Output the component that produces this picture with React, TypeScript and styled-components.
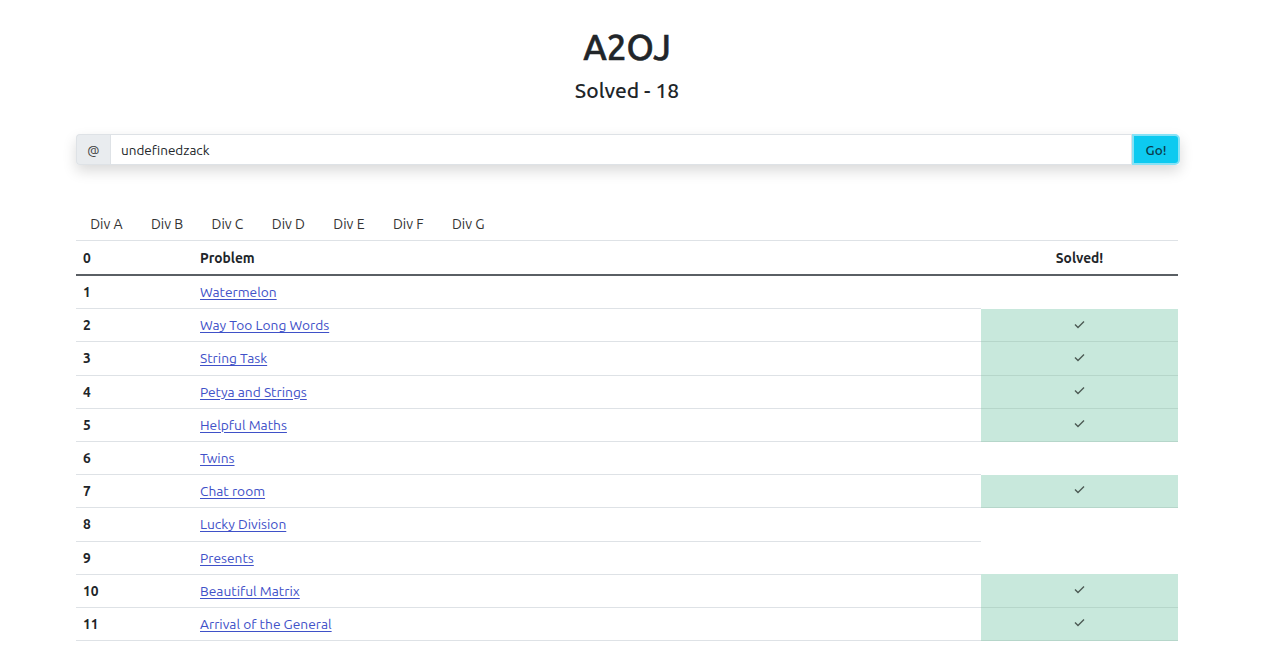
import React from "react";
import styled, { createGlobalStyle } from "styled-components";

const Global = createGlobalStyle`
  html, body { margin: 0; padding: 0; background: #fff; }
  body { font-family: Ubuntu, "Open Sans", "Noto Sans", sans-serif; color: #212529; }
`;

const Page = styled.div`
  width: 1102px;
  margin-left: 76px;
  padding-top: 24px;
`;

const Title = styled.h1`
  margin: 0;
  text-align: center;
  font-size: 35px;
  font-weight: 500;
  line-height: 46px;
  -webkit-text-stroke: 0.6px #212529;
`;

const Sub = styled.h3`
  margin: 5px 0 0;
  text-align: center;
  font-size: 21px;
  font-weight: 500;
  line-height: 30px;
`;

const InputGroup = styled.div`
  margin-top: 29px;
  display: flex;
  height: 31px;
  width: 1104px;
  border-radius: 4px;
  box-shadow: 0 6px 14px rgba(0, 0, 0, 0.15);
`;

const Prepend = styled.span`
  display: flex;
  align-items: center;
  justify-content: center;
  width: 34px;
  background: #e9ecef;
  border: 1px solid #dee2e6;
  border-right: none;
  border-radius: 4px 0 0 4px;
  font-size: 13px;
  color: #444;
  box-sizing: border-box;
`;

const Field = styled.input`
  flex: 1;
  border: 1px solid #dee2e6;
  padding: 0 10px;
  font-family: inherit;
  font-size: 13.5px;
  color: #212529;
  outline: none;
  box-sizing: border-box;
`;

const GoButton = styled.button`
  width: 48px;
  background: #0dcaf0;
  border: 2px solid #86e2f6;
  border-radius: 0 5px 5px 0;
  font-family: inherit;
  font-size: 13.5px;
  font-weight: 500;
  color: #0b3a4a;
  box-sizing: border-box;
  padding: 0;
`;

const Nav = styled.nav`
  margin-top: 44px;
  display: flex;
  height: 31px;
  align-items: flex-start;
`;

const Tab = styled.span`
  padding: 0 14.2px;
  font-size: 14px;
  color: #333;
  line-height: 30px;
`;

const Table = styled.table`
  width: 100%;
  border-collapse: collapse;
  font-size: 13.75px;
`;

const HeadCell = styled.th<{ $center?: boolean }>`
  text-align: ${(p) => (p.$center ? "center" : "left")};
  font-weight: 700;
  height: 33px;
  padding: 0 7px;
  border-top: 1px solid #dee2e6;
  border-bottom: 2px solid #5a5f64;
`;

const Cell = styled.td`
  height: 32.2px;
  padding: 0 7px;
  border-bottom: 1px solid #dee2e6;
`;

const NumCell = styled(Cell)`
  font-weight: 700;
`;

const SolvedCell = styled.td`
  height: 30.2px;
  width: 197px;
  padding: 0 0 2px;
  text-align: center;
  background: #c8e8dc;
  border-bottom: 1px solid #b6d6ca;
  line-height: 0;
`;

const Link = styled.a`
  color: #3f51c8;
  text-decoration: underline;
  text-underline-offset: 2px;
`;

const CheckSvg = styled.svg`
  display: inline-block;
`;

const Check = () => (
  <CheckSvg width="11" height="9" viewBox="0 0 11 9">
    <polyline points="1,4.5 4,7.5 10,1.5" fill="none" stroke="#4d5a55" strokeWidth="1.4" />
  </CheckSvg>
);

const problems: [string, boolean][] = [
  ["Watermelon", false],
  ["Way Too Long Words", true],
  ["String Task", true],
  ["Petya and Strings", true],
  ["Helpful Maths", true],
  ["Twins", false],
  ["Chat room", true],
  ["Lucky Division", false],
  ["Presents", false],
  ["Beautiful Matrix", true],
  ["Arrival of the General", true],
];

export default function App() {
  return (
    <>
      <Global />
      <Page>
        <Title>A2OJ</Title>
        <Sub>Solved - 18</Sub>
        <InputGroup>
          <Prepend>@</Prepend>
          <Field defaultValue="undefinedzack" />
          <GoButton>Go!</GoButton>
        </InputGroup>
        <Nav>
          {["Div A", "Div B", "Div C", "Div D", "Div E", "Div F", "Div G"].map((d) => (
            <Tab key={d}>{d}</Tab>
          ))}
        </Nav>
        <Table>
          <thead>
            <tr>
              <HeadCell style={{ width: 103 }}>0</HeadCell>
              <HeadCell>Problem</HeadCell>
              <HeadCell $center style={{ width: 183 }}>Solved!</HeadCell>
            </tr>
          </thead>
          <tbody>
            {problems.map(([name, solved], i) => (
              <tr key={name}>
                <NumCell>{i + 1}</NumCell>
                <Cell>
                  <Link href="#">{name}</Link>
                </Cell>
                {solved ? (
                  <SolvedCell>
                    <Check />
                  </SolvedCell>
                ) : null}
              </tr>
            ))}
          </tbody>
        </Table>
      </Page>
    </>
  );
}
